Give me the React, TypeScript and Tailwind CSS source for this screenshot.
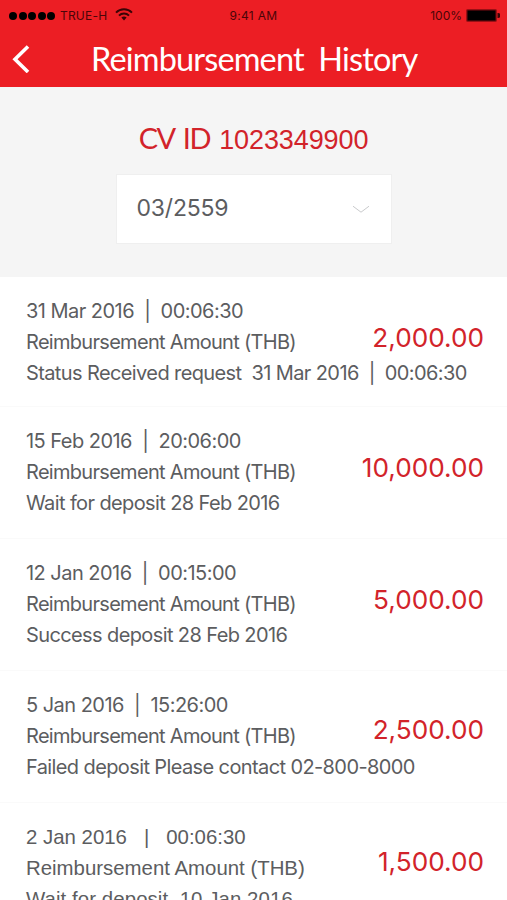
import { clsx } from 'clsx';

const items = [
    {
        date: '31 Mar 2016  |  00:06:30',
        label: 'Reimbursement Amount (THB)',
        status: 'Status Received request  31 Mar 2016  |  00:06:30',
        amount: '2,000.00',
        row: 'h-[130px] pt-[19px]',
        amountStyle: 'pt-[26px]',
    },
    {
        date: '15 Feb 2016  |  20:06:00',
        label: 'Reimbursement Amount (THB)',
        status: 'Wait for deposit 28 Feb 2016',
        amount: '10,000.00',
        row: 'h-[132px] pt-[19px]',
        amountStyle: 'pt-[26px]',
    },
    {
        date: '12 Jan 2016  |  00:15:00',
        label: 'Reimbursement Amount (THB)',
        status: 'Success deposit 28 Feb 2016',
        amount: '5,000.00',
        row: 'h-[132px] pt-[19px]',
        amountStyle: 'pt-[26px]',
    },
    {
        date: '5 Jan 2016  |  15:26:00',
        label: 'Reimbursement Amount (THB)',
        status: 'Failed deposit Please contact 02-800-8000',
        amount: '2,500.00',
        row: 'h-[132px] pt-[19px]',
        amountStyle: 'pt-[24px]',
    },
    {
        date: '2 Jan 2016   |   00:06:30',
        label: 'Reimbursement Amount (THB)',
        status: 'Wait for deposit  10 Jan 2016',
        amount: '1,500.00',
        row: 'h-[132px] pt-[19px]',
        amountStyle: 'pt-[24px]',
        plain: true,
    },
];

function StatusBar() {
    return (
        <div className="grid h-[31px] grid-cols-3 items-center pl-[9px] pr-[7px] text-[12px] text-[#4a0508]">
            <div className="flex items-center">
                <div className="flex gap-[1.5px]">
                    {[0, 1, 2, 3, 4].map((dot) => (
                        <span key={dot} className="size-[8px] rounded-full bg-black" />
                    ))}
                </div>
                <span className="ml-[5px] tracking-[0.2px]">TRUE-H</span>
                <svg className="mb-[2px] ml-[8px]" width="18" height="13" viewBox="0 0 18 13" fill="none" stroke="#3a0406" strokeWidth="2">
                    <path d="M1 4.6a11.4 11.4 0 0 1 16 0" />
                    <path d="M4 7.6a7.1 7.1 0 0 1 10 0" />
                    <path d="M6.4 9.6a3.8 3.8 0 0 1 5.2 0L9 12.4z" fill="#3a0406" stroke="none" />
                </svg>
            </div>
            <span className="pr-[2px] text-center tracking-[0.3px]">9:41 AM</span>
            <div className="flex items-center justify-end">
                <span>100%</span>
                <svg className="mb-px ml-[4px]" width="34" height="13" viewBox="0 0 34 13">
                    <rect x="0.5" y="0.5" width="30" height="12" rx="1" fill="#7a0b10" stroke="#9a1015" />
                    <rect x="1.5" y="1.5" width="28" height="10" fill="#000" />
                    <path d="M31.5 4h.5a2.5 2.5 0 0 1 0 5h-.5z" fill="#3a0406" />
                </svg>
            </div>
        </div>
    );
}

export default function App() {
    return (
        <div className="h-[900px] w-[507px] overflow-hidden bg-white font-['Inter',sans-serif] text-[#5c5d5f]">
            {/* Header */}
            <header className="h-[87px] bg-[#ec1e24]">
                <StatusBar />
                <div className="flex h-[56px] items-center pl-[12px]">
                    <svg width="18" height="28" viewBox="0 0 18 28" fill="none" stroke="#fff" strokeWidth="3.6">
                        <path d="M16 1.5 3 14.2 16 27" />
                    </svg>
                    <h1 className="ml-[61px] whitespace-nowrap font-['Lato',sans-serif] text-[32.5px] leading-[40px] tracking-[-0.84px] text-white [word-spacing:7px]">
                        Reimbursement History
                    </h1>
                </div>
            </header>

            {/* Account and month */}
            <section className="flex h-[190px] flex-col items-center bg-[#f5f5f5] pt-[31px]">
                <div className="flex h-[40px] items-baseline gap-[9px] text-[#d2232a]">
                    <span className="font-['Lato',sans-serif] text-[29px] leading-[40px] tracking-[-1.4px] [word-spacing:3px]">CV ID</span>
                    <span className="font-['Liberation_Sans',sans-serif] text-[27px] leading-[40px] tracking-[-0.1px]">1023349900</span>
                </div>
                <button className="mt-[16px] flex h-[70px] w-[276px] items-center justify-between border border-[#efefef] bg-white pl-[20px] pr-[21px]">
                    <span className="pb-[3px] text-[23px] leading-[30px] tracking-[-0.2px]">03/2559</span>
                    <svg width="18" height="9" viewBox="0 0 18 9" fill="none" stroke="#c9cacc">
                        <path d="M1 1.2 9 7.2 17 1.2" />
                    </svg>
                </button>
            </section>

            {/* History */}
            <ul>
                {items.map((item) => (
                    <li key={item.date} className={clsx('flex justify-between border-b border-[#fafafa] pl-[26px] pr-[23px]', item.row)}>
                        <div
                            className={clsx(
                                'w-0 whitespace-pre leading-[31px]',
                                item.plain ? "font-['Liberation_Sans',sans-serif] text-[20.4px]" : 'text-[20px] tracking-[-0.61px]'
                            )}
                        >
                            <p className={clsx(!item.plain && 'tracking-[-0.53px]')}>{item.date}</p>
                            <p className={clsx(!item.plain && 'tracking-[-0.7px]')}>{item.label}</p>
                            <p className={clsx(item.plain && 'tracking-[0.08px]')}>{item.status}</p>
                        </div>
                        <div className={clsx('text-[26.2px] leading-[32px] text-[#d2232a]', item.amountStyle)}>{item.amount}</div>
                    </li>
                ))}
            </ul>
        </div>
    );
}
